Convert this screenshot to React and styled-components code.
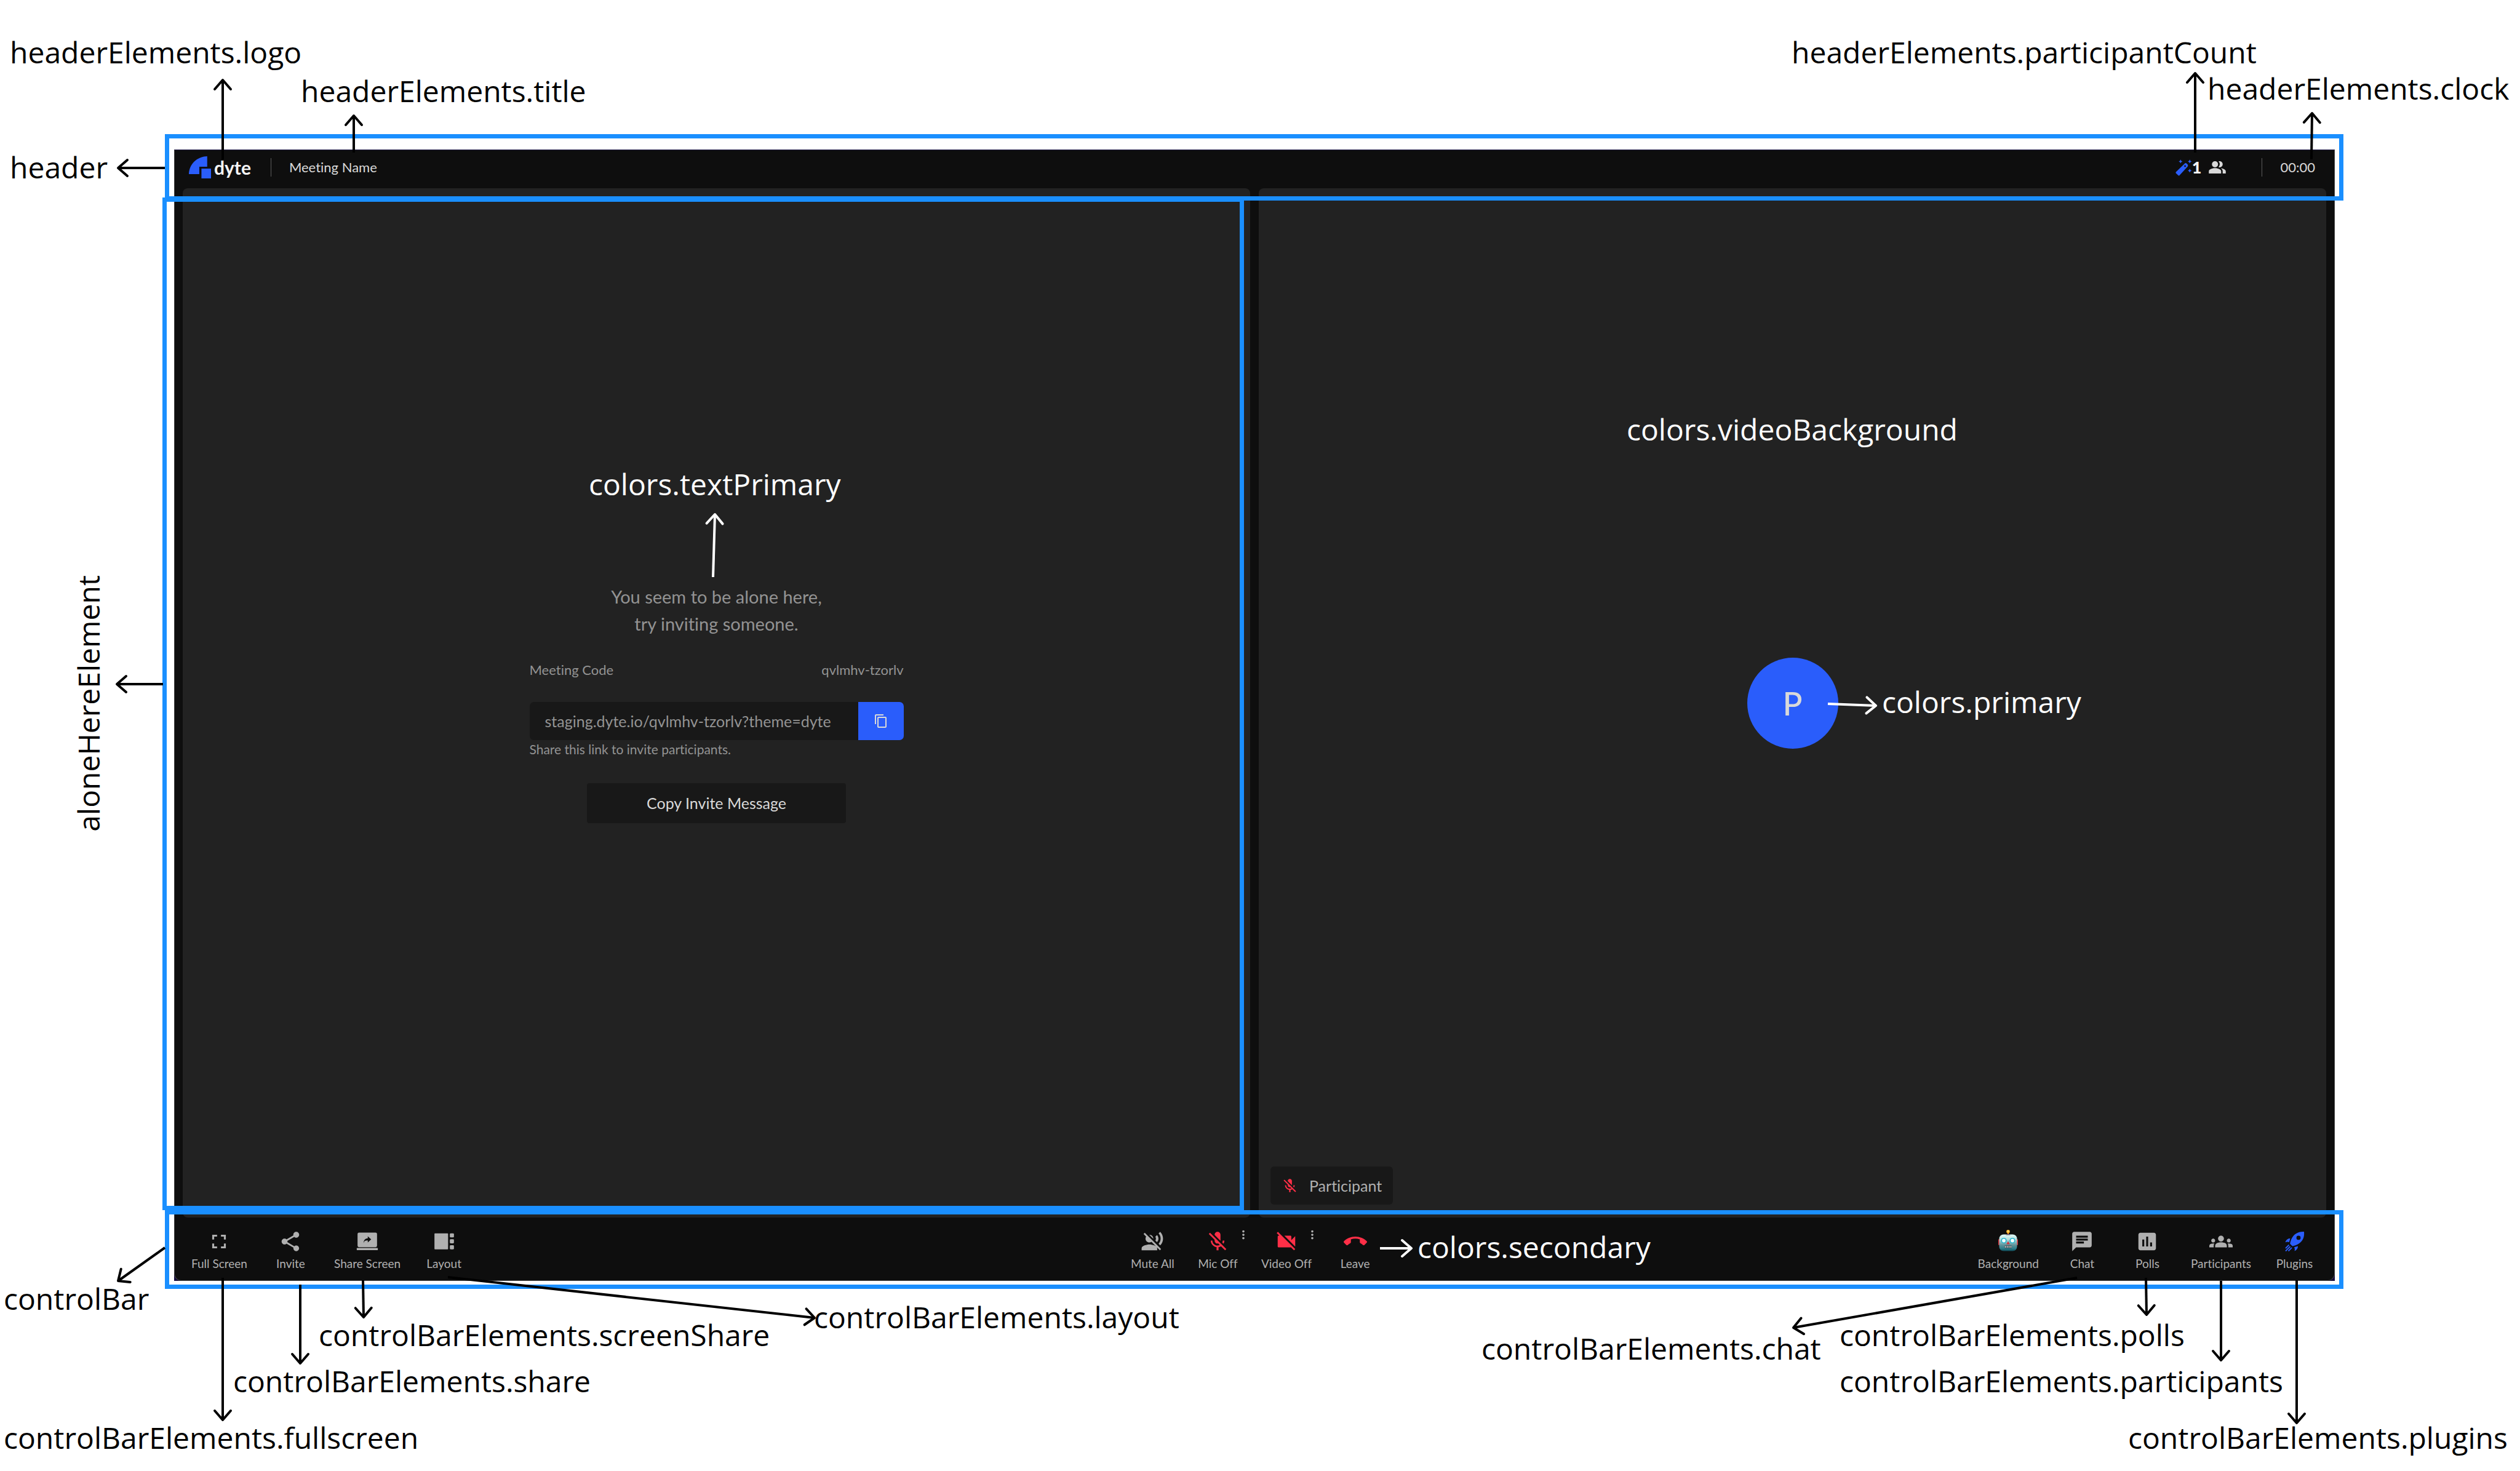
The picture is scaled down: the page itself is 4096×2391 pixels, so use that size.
import React from 'react';
import styled, { createGlobalStyle, css } from 'styled-components';
import {
  MdCallEnd,
  MdChat,
  MdContentCopy,
  MdFullscreen,
  MdGroups,
  MdMicOff,
  MdMoreVert,
  MdPeopleAlt,
  MdPoll,
  MdShare,
  MdVideocamOff,
  MdVoiceOverOff,
} from 'react-icons/md';

const color = {
  primary: '#2a5dfb',
  secondary: '#ff2f47',
  outline: '#1a8fff',
  background: '#0e0e0e',
  videoBackground: '#222222',
  field: '#181818',
  textPrimary: '#d9d9d9',
  textMuted: '#939393',
  control: '#b0b0b0',
};

const SHEET_W = 4096;
const SHEET_H = 2391;
const pctX = (n) => `${(n / SHEET_W) * 100}%`;
const pctY = (n) => `${(n / SHEET_H) * 100}%`;

const GlobalStyle = createGlobalStyle`
  *, *::before, *::after { box-sizing: border-box; }
  body {
    margin: 0;
    background: #ffffff;
    font-family: Lato, "Noto Sans", sans-serif;
    font-variant-ligatures: none;
  }
  button, input { font: inherit; font-variant-ligatures: none; }
  svg { display: block; }
`;

/* ---------- sheet ---------- */

const Sheet = styled.main`
  position: relative;
  display: flex;
  min-height: 100vh;
  padding: 243px 301px 309px 283px;
  overflow: hidden;
`;

const Backdrop = styled.div`
  flex: 1;
  display: flex;
  background: #170c3c;
`;

const MeetingWindow = styled.section`
  flex: 1;
  display: flex;
  flex-direction: column;
  background: ${color.background};
  border: 1px solid #404040;
  border-top-color: #2c2553;
  border-radius: 0 0 12px 12px;
`;

/* ---------- header ---------- */

const Header = styled.header`
  display: flex;
  align-items: center;
  height: 62px;
  padding: 0 31px 6px 23px;
  color: ${color.textPrimary};
  font-size: 22px;
  line-height: 30px;
`;

const Logo = styled.a`
  display: flex;
  align-items: center;
  gap: 5px;
  color: #f4f4f4;
  font-size: 30px;
  font-weight: 700;
  text-decoration: none;
`;

const Rule = styled.span`
  width: 1px;
  height: 30px;
  margin: 0 29px 0 32px;
  background: #5c5c5c;
`;

const Title = styled.h1`
  margin: 0;
  font: inherit;
`;

const HeaderEnd = styled.div`
  display: flex;
  align-items: center;
  margin-left: auto;
`;

const Count = styled.span`
  display: flex;
  align-items: center;
  margin-right: 25px;
  color: #f4f4f4;
  font-size: 27px;
  font-weight: 900;

  svg:last-child {
    margin-left: 11px;
    color: ${color.textPrimary};
  }
`;

/* ---------- tiles ---------- */

const Stage = styled.div`
  flex: 1;
  display: flex;
  gap: 14px;
  padding: 0 13px;
`;

const Tile = styled.section`
  position: relative;
  flex: 1;
  display: flex;
  flex-direction: column;
  align-items: center;
  justify-content: center;
  background: ${color.videoBackground};
  border-radius: 8px;
`;

const InvitePanel = styled.div`
  display: flex;
  flex-direction: column;
  width: 608px;
  color: ${color.textMuted};
  font-size: 22px;
  line-height: 32px;
`;

const Message = styled.p`
  margin: 0 0 37px;
  font-size: 29px;
  line-height: 44px;
  text-align: center;
`;

const CodeRow = styled.div`
  display: flex;
  justify-content: space-between;
  margin-bottom: 36px;
`;

const LinkRow = styled.div`
  display: flex;
  height: 62px;
  border-radius: 7px;
  overflow: hidden;
`;

const LinkInput = styled.input`
  flex: 1;
  min-width: 0;
  padding: 0 25px;
  border: 0;
  background: ${color.field};
  color: ${color.textMuted};
  font-size: 25px;
`;

const CopyButton = styled.button`
  display: flex;
  align-items: center;
  justify-content: center;
  width: 74px;
  padding: 0;
  border: 0;
  background: ${color.primary};
  color: ${color.textPrimary};
`;

const Hint = styled.label`
  margin-bottom: 40px;
  font-size: 21px;
  line-height: 30px;
`;

const InviteButton = styled.button`
  align-self: center;
  width: 421px;
  height: 65px;
  border: 0;
  border-radius: 4px;
  background: ${color.field};
  color: ${color.textPrimary};
  font-size: 25px;
`;

const Avatar = styled.div`
  display: flex;
  align-items: center;
  justify-content: center;
  width: 148px;
  height: 148px;
  border-radius: 50%;
  background: ${color.primary};
  color: ${color.textPrimary};
  font-size: 53px;
  font-weight: 500;
`;

const NameTag = styled.div`
  position: absolute;
  left: 19px;
  bottom: 21px;
  display: flex;
  align-items: center;
  gap: 18px;
  height: 62px;
  padding: 0 18px;
  border-radius: 6px;
  background: ${color.field};
  color: ${color.control};
  font-size: 25px;

  svg { color: ${color.secondary}; }
`;

/* ---------- control bar ---------- */

const ControlBar = styled.footer`
  display: grid;
  grid-template-columns: 1fr auto 1fr;
  height: 102px;
  padding: 20px 29px 0 27px;
`;

const Group = styled.div`
  display: flex;
  align-items: flex-start;
  justify-content: ${(p) => (p.$end ? 'flex-end' : 'flex-start')};
  gap: 35px;
`;

const ControlSlot = styled.div`
  position: relative;
`;

const Control = styled.button`
  display: flex;
  flex-direction: column;
  align-items: center;
  gap: 5px;
  min-width: 71px;
  padding: 0;
  border: 0;
  background: none;
  color: ${color.control};
  font-size: 19px;
  line-height: 24px;

  svg { color: ${(p) => p.$tone || color.control}; }
`;

const MoreButton = styled.button`
  position: absolute;
  top: -3px;
  left: calc(50% + 31px);
  padding: 0;
  border: 0;
  background: none;
  color: ${color.control};
`;

/* ---------- annotations ---------- */

const Outline = styled.div`
  position: absolute;
  left: ${(p) => pctX(p.$x)};
  top: ${(p) => pctY(p.$y)};
  width: ${(p) => pctX(p.$w)};
  height: ${(p) => pctY(p.$h)};
  border: 7px solid ${color.outline};
  pointer-events: none;
`;

const Arrows = styled.svg`
  position: absolute;
  inset: 0;
  width: 100%;
  height: 100%;
  pointer-events: none;
`;

const Note = styled.span`
  position: absolute;
  left: ${(p) => pctX(p.$x)};
  top: ${(p) => pctY(p.$y)};
  color: ${(p) => (p.$light ? '#ffffff' : '#000000')};
  font-family: "Open Sans", "Noto Sans", sans-serif;
  font-size: 48px;
  line-height: 66px;
  white-space: nowrap;
  ${(p) =>
    p.$vertical &&
    css`
      writing-mode: vertical-rl;
      transform: rotate(180deg);
    `}
`;

const outlines = [
  { x: 268, y: 218, w: 3541, h: 108 },
  { x: 264, y: 321, w: 1758, h: 1646 },
  { x: 268, y: 1967, w: 3541, h: 128 },
];

const notes = [
  { text: 'headerElements.logo', x: 16, y: 52 },
  { text: 'headerElements.title', x: 489, y: 115 },
  { text: 'headerElements.participantCount', x: 2912, y: 52 },
  { text: 'headerElements.clock', x: 3588, y: 111 },
  { text: 'header', x: 16, y: 239 },
  { text: 'aloneHereElement', x: 111, y: 935, vertical: true },
  { text: 'controlBar', x: 6, y: 2078 },
  { text: 'controlBarElements.screenShare', x: 518, y: 2137 },
  { text: 'controlBarElements.share', x: 379, y: 2212 },
  { text: 'controlBarElements.fullscreen', x: 6, y: 2304 },
  { text: 'controlBarElements.layout', x: 1323, y: 2108 },
  { text: 'controlBarElements.chat', x: 2408, y: 2159 },
  { text: 'controlBarElements.polls', x: 2990, y: 2137 },
  { text: 'controlBarElements.participants', x: 2990, y: 2212 },
  { text: 'controlBarElements.plugins', x: 3459, y: 2304 },
  { text: 'colors.textPrimary', x: 957, y: 754, light: true },
  { text: 'colors.videoBackground', x: 2644, y: 665, light: true },
  { text: 'colors.primary', x: 3059, y: 1108, light: true },
  { text: 'colors.secondary', x: 2304, y: 1994, light: true },
];

/* from x, from y, tip x, tip y, light */
const arrows = [
  [362, 259, 362, 130],
  [575, 248, 575, 188],
  [268, 273, 192, 273],
  [3568, 248, 3568, 119],
  [3757, 259, 3758, 184],
  [265, 1112, 190, 1112],
  [268, 2028, 192, 2082],
  [362, 2077, 362, 2308],
  [488, 2088, 488, 2216],
  [590, 2081, 591, 2141],
  [728, 2076, 1324, 2142],
  [3376, 2077, 2915, 2158],
  [3488, 2077, 3489, 2137],
  [3610, 2082, 3610, 2211],
  [3733, 2081, 3733, 2313],
  [1159, 938, 1162, 836, true],
  [2971, 1144, 3049, 1147, true],
  [2243, 2029, 2294, 2029, true],
];

function Arrow({ from, tip, light }) {
  const angle = (Math.atan2(tip[1] - from[1], tip[0] - from[0]) * 180) / Math.PI;
  return (
    <g fill="none" stroke={light ? '#ffffff' : '#000000'} strokeWidth="4">
      <path d={`M${from[0]} ${from[1]}L${tip[0]} ${tip[1]}`} />
      <path
        d="M-15 -13L0 0L-15 13"
        strokeLinecap="round"
        strokeLinejoin="round"
        transform={`translate(${tip[0]} ${tip[1]}) rotate(${angle})`}
      />
    </g>
  );
}

/* ---------- drawings ---------- */

const LogoMark = () => (
  <svg width="36" height="36" viewBox="0 0 52 52" fill={color.primary} aria-hidden="true">
    <path d="M43 0V24.5H24.5V42H0C1 18 19 1 43 0Z" />
    <path d="M29.5 29H52V52H29.5Z" />
  </svg>
);

const WandIcon = () => (
  <svg width="27" height="27" viewBox="0 0 39 39" fill={color.primary} aria-hidden="true">
    <path
      fillRule="evenodd"
      d="M21.5 10Q24 7.5 26.5 10L28.5 12Q30.500 14.500 28.500 17L9.500 37.500Q8 39 6.500 37.500L1 32.500Q0 31 1.200 29.500ZM22.500 13.500L20 16L22.500 18.500L25 16Z"
    />
    <path d="M12 .5L13.500 3.500L16.500 5L13.500 6.500L12 9.500L10.500 6.500L7.500 5L10.500 3.500Z" />
    <path d="M33.500 .5L35 3.500L38 5L35 6.500L33.500 9.500L32 6.500L29 5L32 3.500Z" />
    <path d="M33.500 22L35 25L38 26.500L35 28L33.500 31L32 28L29 26.500L32 25Z" />
  </svg>
);

const ShareScreenIcon = () => (
  <svg width="38" height="38" viewBox="0 0 24 24" fill="currentColor" aria-hidden="true">
    <path
      fillRule="evenodd"
      d="M3.500 2.800H20.500Q22 2.800 22 4.300V16.300Q22 17.800 20.500 17.800H3.500Q2 17.800 2 16.300V4.300Q2 2.800 3.500 2.800ZM8.200 13.800C8.500 11.600 9.800 10.900 12.500 10.900V13L16 9.800L12.500 6.700V8.700C9.500 9 8.200 11 8.200 13.800Z"
    />
    <rect x="1.200" y="18.700" width="21.600" height="2.200" rx=".4" />
  </svg>
);

const LayoutIcon = () => (
  <svg width="38" height="38" viewBox="0 0 24 24" fill="currentColor" aria-hidden="true">
    <rect x="2" y="3.600" width="14" height="16.400" rx=".6" />
    <rect x="17.800" y="3.600" width="4.200" height="4.200" rx=".9" />
    <rect x="17.800" y="9.700" width="4.200" height="4.200" rx=".9" />
    <rect x="17.800" y="15.800" width="4.200" height="4.200" rx=".9" />
  </svg>
);

const RobotIcon = () => (
  <svg width="38" height="38" viewBox="0 0 38 38" aria-hidden="true">
    <defs>
      <linearGradient id="robotFace" x1="0" y1="0" x2="0" y2="1">
        <stop offset="0" stopColor="#e2fbf8" />
        <stop offset=".3" stopColor="#b4dcdc" />
        <stop offset=".65" stopColor="#5c9199" />
        <stop offset=".85" stopColor="#2b7e8b" />
        <stop offset="1" stopColor="#0f4a57" />
      </linearGradient>
    </defs>
    <rect x="3" y="15" width="3" height="10" rx="1.500" fill="#d8303a" />
    <rect x="32" y="15" width="3" height="10" rx="1.500" fill="#d8303a" />
    <rect x="18" y="4" width="2" height="3" fill="#f08a24" />
    <circle cx="19" cy="2.800" r="2.800" fill="#ffb52b" />
    <circle cx="19" cy="2.200" r="1.200" fill="#ffe27a" />
    <rect x="4.500" y="7.500" width="29" height="27" rx="7" fill="url(#robotFace)" />
    <path d="M15 8.500Q19 5.500 23 8.500Z" fill="#5b4376" />
    <circle cx="12" cy="17.500" r="4.600" fill="#27b6cf" />
    <circle cx="26" cy="17.500" r="4.600" fill="#27b6cf" />
    <circle cx="12" cy="17.500" r="2.900" fill="#f4feff" />
    <circle cx="26" cy="17.500" r="2.900" fill="#f4feff" />
    <path d="M19 18.500L21.800 23.500H16.200Z" fill="#d8303a" />
    <rect x="13" y="25.500" width="12" height="4.200" rx="1" fill="#31424a" />
    <path d="M14.500 26.200V29M17.500 26.200V29M20.500 26.200V29M23.500 26.200V29" stroke="#d9e4e4" strokeWidth="1.500" />
  </svg>
);

const RocketIcon = () => (
  <svg width="38" height="38" viewBox="0 0 38 38" fill="currentColor" aria-hidden="true">
    <path
      fillRule="evenodd"
      d="M34 3C24 2.500 18 7 14.500 13C12.500 16.500 11.500 20 11.300 22.800L15 26.500C18 26 21.500 25 25 22.800C31 19 35 13 34 3ZM25 9.500A3.400 3.400 0 1 1 25 16.300A3.400 3.400 0 1 1 25 9.500Z"
    />
    <path d="M11.500 14C8 14 5.200 15.800 3.500 20.200C6 19.300 7.800 19.300 9.800 20Z" />
    <path d="M24 26.500C24 30 22.500 32.500 18.500 34.500C19.200 32 19 30.200 18 28.200Z" />
    <path
      d="M9.500 24.500L4 30M11.500 27L4 34.500M14 29L8.500 34.500"
      fill="none"
      stroke="currentColor"
      strokeWidth="1.800"
    />
  </svg>
);

const leftControls = [
  { label: 'Full Screen', icon: <MdFullscreen size={38} /> },
  { label: 'Invite', icon: <MdShare size={38} /> },
  { label: 'Share Screen', icon: <ShareScreenIcon /> },
  { label: 'Layout', icon: <LayoutIcon /> },
];

const callControls = [
  { label: 'Mute All', icon: <MdVoiceOverOff size={38} /> },
  { label: 'Mic Off', icon: <MdMicOff size={38} />, tone: color.secondary, more: 'Microphone options' },
  { label: 'Video Off', icon: <MdVideocamOff size={38} />, tone: color.secondary, more: 'Camera options' },
  { label: 'Leave', icon: <MdCallEnd size={38} />, tone: color.secondary },
];

const rightControls = [
  { label: 'Background', icon: <RobotIcon /> },
  { label: 'Chat', icon: <MdChat size={38} /> },
  { label: 'Polls', icon: <MdPoll size={38} /> },
  { label: 'Participants', icon: <MdGroups size={38} /> },
  { label: 'Plugins', icon: <RocketIcon />, tone: color.primary },
];

function Controls({ items, end }) {
  return (
    <Group $end={end}>
      {items.map((item) => (
        <ControlSlot key={item.label}>
          <Control type="button" $tone={item.tone}>
            {item.icon}
            {item.label}
          </Control>
          {item.more && (
            <MoreButton type="button" aria-label={item.more}>
              <MdMoreVert size={22} />
            </MoreButton>
          )}
        </ControlSlot>
      ))}
    </Group>
  );
}

export default function App() {
  return (
    <Sheet>
      <GlobalStyle />
      <Backdrop>
        <MeetingWindow>
          <Header>
            <Logo href="#home">
              <LogoMark />
              dyte
            </Logo>
            <Rule />
            <Title>Meeting Name</Title>
            <HeaderEnd>
              <Count>
                <WandIcon />
                1
                <MdPeopleAlt size={30} />
              </Count>
              <Rule />
              <time>00:00</time>
            </HeaderEnd>
          </Header>

          <Stage>
            <Tile>
              <InvitePanel>
                <Message>
                  You seem to be alone here,
                  <br />
                  try inviting someone.
                </Message>
                <CodeRow>
                  <span>Meeting Code</span>
                  <span>qvlmhv-tzorlv</span>
                </CodeRow>
                <LinkRow>
                  <LinkInput id="invite-link" readOnly value="staging.dyte.io/qvlmhv-tzorlv?theme=dyte" />
                  <CopyButton type="button" aria-label="Copy link">
                    <MdContentCopy size={24} />
                  </CopyButton>
                </LinkRow>
                <Hint htmlFor="invite-link">Share this link to invite participants.</Hint>
                <InviteButton type="button">Copy Invite Message</InviteButton>
              </InvitePanel>
            </Tile>
            <Tile>
              <Avatar>P</Avatar>
              <NameTag>
                <MdMicOff size={27} />
                Participant
              </NameTag>
            </Tile>
          </Stage>

          <ControlBar>
            <Controls items={leftControls} />
            <Controls items={callControls} />
            <Controls items={rightControls} end />
          </ControlBar>
        </MeetingWindow>
      </Backdrop>

      {outlines.map((o) => (
        <Outline key={o.y} $x={o.x} $y={o.y} $w={o.w} $h={o.h} />
      ))}
      <Arrows viewBox={`0 0 ${SHEET_W} ${SHEET_H}`} preserveAspectRatio="none" aria-hidden="true">
        {arrows.map(([x1, y1, x2, y2, light]) => (
          <Arrow key={`${x1}-${y1}`} from={[x1, y1]} tip={[x2, y2]} light={light} />
        ))}
      </Arrows>
      {notes.map((n) => (
        <Note key={n.text} $x={n.x} $y={n.y} $light={n.light} $vertical={n.vertical}>
          {n.text}
        </Note>
      ))}
    </Sheet>
  );
}
